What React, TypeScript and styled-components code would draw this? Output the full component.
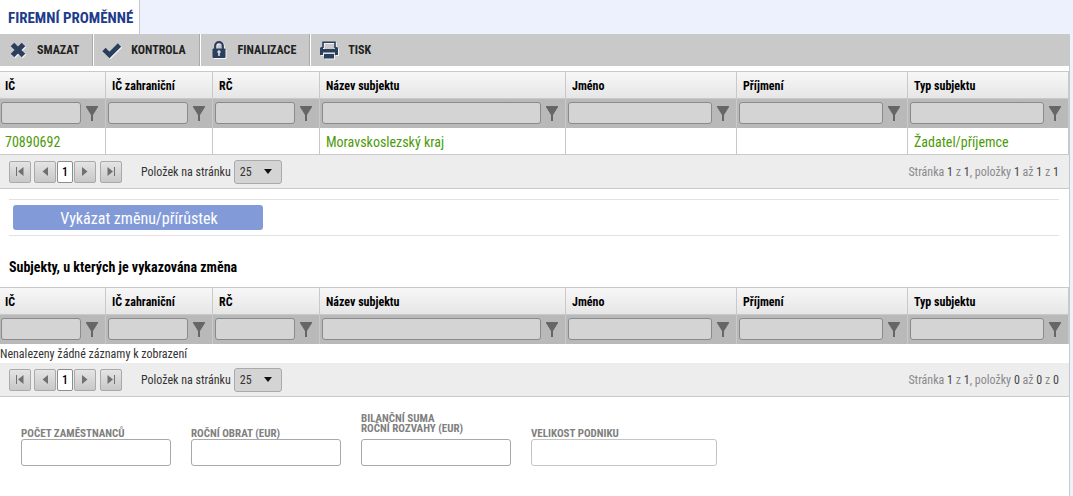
import React from "react";
import styled, { createGlobalStyle } from "styled-components";

const Global = createGlobalStyle`
  * { box-sizing: border-box; }
  body {
    margin: 0;
    background: #edf1fd;
    color: #333;
    font-family: "Roboto Condensed", "Liberation Sans Narrow", Roboto, sans-serif;
    font-size: 12px;
    line-height: 16px;
  }
  button, input, select { font: inherit; color: inherit; margin: 0; }
`;

const Page = styled.div`
  margin-right: 3px;
`;

const Tab = styled.h1`
  display: flex;
  align-items: center;
  width: fit-content;
  height: 34px;
  margin: 0;
  padding: 2px 6px 0 8px;
  background: #fff;
  border-right: 1px solid #c9c9c9;
  color: #1e3c8c;
  font-size: 15px;
  font-weight: 700;
  white-space: nowrap;
`;

const Panel = styled.main`
  min-height: calc(100vh - 34px);
  background: #fff;
  border-right: 1px solid #c9c9c9;
`;

const Toolbar = styled.div`
  display: flex;
  height: 32px;
  background: #c9c9c9;
  margin-right: -1px;
  border-top-right-radius: 2px;
`;

const ToolButton = styled.button`
  display: flex;
  align-items: center;
  gap: 9px;
  padding: 0 14px 0 8px;
  border: 0;
  background: none;
  color: #222;
  font-weight: 700;
  white-space: nowrap;

  svg { width: 20px; height: 20px; filter: drop-shadow(1px 1px 0 #f2f2f2); }
  &:not(:last-child) {
    border-right: 1px solid #fff;
    box-shadow: inset -1px 0 0 #aaa;
  }
`;

const Grid = styled.section`
  margin-top: 5px;
`;

const Table = styled.table`
  width: 100%;
  table-layout: fixed;
  border-collapse: separate;
  border-spacing: 0;
  border-top: 1px solid #c9c9c9;
`;

const Col = styled.col<{ $w?: number }>`
  width: ${(p) => (p.$w ? p.$w + "px" : "auto")};
`;

const HeadCell = styled.th`
  height: 27px;
  padding: 1px 6px 0 6px;
  border-left: 1px solid #c9c9c9;
  border-bottom: 1px solid #c9c9c9;
  background: linear-gradient(#f7f7f7, #e6e6e6);
  color: #000;
  text-align: left;
  font-weight: 700;
  white-space: nowrap;
  &:first-child { border-left: 0; padding-left: 5px; }
  &:last-child { border-right: 1px solid #c9c9c9; }
`;

const FilterCell = styled.td`
  height: 29px;
  padding: 0 7px 1px 2px;
  border-left: 1px solid #c9c9c9;
  background: #b9b9b9;
  &:first-child { border-left: 0; padding-left: 1px; }
  &:last-child { border-right: 1px solid #c9c9c9; }
`;

const FilterBox = styled.div`
  display: flex;
  align-items: center;
  gap: 5px;
`;

const FilterInput = styled.input`
  flex: 1;
  min-width: 0;
  height: 22px;
  border: 1px solid #8a8a8a;
  border-radius: 3px;
  background: #d4d4d4;
  padding: 0 4px;
`;

const FilterButton = styled.button`
  display: flex;
  padding: 0;
  border: 0;
  background: none;
  color: #666;
`;

const Cell = styled.td`
  height: 27px;
  padding: 2px 6px 0 6px;
  border-left: 1px solid #c9c9c9;
  border-bottom: 1px solid #c9c9c9;
  color: #4c9a06;
  font-size: 14px;
  white-space: nowrap;
  &:first-child { border-left: 0; padding-left: 5px; }
  &:last-child { border-right: 1px solid #c9c9c9; }
`;

const EmptyCell = styled.td`
  height: 19px;
  padding: 0;
`;

const Pager = styled.nav`
  display: flex;
  align-items: center;
  height: 34px;
  padding: 0 10px 0 9px;
  background: #ededed;
  border-bottom: 1px solid #c9c9c9;
  white-space: nowrap;
`;

const PagerButtons = styled.div`
  display: flex;
  gap: 3px;
  margin-right: 19px;
`;

const PagerGroup = styled.div`
  display: flex;
  gap: 1px;
  padding-right: 1px;
`;

const PagerButton = styled.button`
  display: flex;
  align-items: center;
  justify-content: center;
  width: 22px;
  height: 22px;
  padding: 0;
  border: 1px solid #aaa;
  border-radius: 2px;
  background: linear-gradient(#e4e4e4, #c8c8c8);
  color: #707070;
`;

const PageNumber = styled(PagerButton)`
  width: 16px;
  background: #fff;
  border-color: #8c8c8c;
  color: #000;
  font-weight: 500;
`;

const SizeLabel = styled.label`
  display: flex;
  align-items: center;
  gap: 3px;
`;

const SelectWrap = styled.span`
  display: grid;
  grid-template-columns: 1fr 18px;
  align-items: center;
  svg { grid-area: 1 / 2; pointer-events: none; }
`;

const Select = styled.select`
  grid-area: 1 / 1 / 2 / 3;
  appearance: none;
  width: 48px;
  height: 24px;
  padding: 0 5px;
  border: 1px solid #aaa;
  border-radius: 3px;
  background: #d4d4d4;
`;

const PagerInfo = styled.span`
  margin-left: auto;
  color: #8a8a8a;
  strong { color: #444; font-weight: 400; }
`;

const ActionBar = styled.div`
  margin: 10px 10px 0 9px;
  padding: 5px 4px;
  border-top: 1px solid #e2e2e2;
  border-bottom: 1px solid #e2e2e2;
`;

const ActionButton = styled.button`
  display: block;
  width: 250px;
  height: 25px;
  padding: 2px 0 0 2px;
  border: 0;
  border-radius: 3px;
  background: #829bd8;
  color: #fff;
  font-size: 16px;
`;

const Heading = styled.h2`
  margin: 22px 9px 11px;
  color: #000;
  font-size: 14px;
  line-height: 18px;
  font-weight: 700;
`;

const Form = styled.form`
  display: flex;
  flex-wrap: wrap;
  align-items: flex-end;
  gap: 20px;
  padding: 17px 21px 30px;
`;

const Field = styled.label<{ $w: number }>`
  display: flex;
  flex-direction: column;
  width: ${(p) => p.$w}px;
  color: #808080;
  font-size: 11px;
  line-height: 10px;
  font-weight: 700;
`;

const FieldCaption = styled.span<{ $lines?: boolean }>`
  padding-bottom: ${(p) => (p.$lines ? 5 : 0)}px;
  white-space: pre-line;
`;

const FieldInput = styled.input`
  width: 100%;
  height: 27px;
  padding: 0 6px;
  border: 1px solid #a8a8a8;
  border-radius: 3px;
  background: #fff;
  &:read-only { border-color: #c4c4c4; }
`;

const navy = "#2a3e5e";

const CrossIcon = () => (
  <svg viewBox="0 0 20 20" aria-hidden="true">
    <path d="M4.500 4.500 15.500 15.500M15.500 4.500 4.500 15.500" stroke={navy} strokeWidth="5" />
  </svg>
);
const CheckIcon = () => (
  <svg viewBox="0 0 20 20" aria-hidden="true">
    <path d="M2 9.500 7.500 15 17.500 5" fill="none" stroke={navy} strokeWidth="4.600" />
  </svg>
);
const LockIcon = () => (
  <svg viewBox="0 0 20 20" aria-hidden="true">
    <path d="M6.200 10V6a3.800 3.800 0 0 1 7.600 0V10" fill="none" stroke={navy} strokeWidth="2.200" />
    <rect x="3.500" y="8.500" width="13" height="9.500" rx="1" fill={navy} />
    <path d="M10 10.200a1.700 1.700 0 0 1 .8 3.200V16H9.200v-2.600A1.700 1.700 0 0 1 10 10.200z" fill="#d8d8d8" />
  </svg>
);
const PrinterIcon = () => (
  <svg viewBox="0 0 20 20" aria-hidden="true">
    <path d="M4 8V2.300h12V8" fill="none" stroke={navy} strokeWidth="1.600" />
    <path d="M1 8.500q0-1.500 1.500-1.500H4v2h12V7h1.500q1.500 0 1.500 1.500V15h-3v-2.500H4V15H1z" fill={navy} />
    <path d="M5 14h10v4.500H5z" fill={navy} />
  </svg>
);
const FunnelIcon = () => (
  <svg width="12" height="15" viewBox="0 0 12 15" aria-hidden="true">
    <path d="M0 0h12v1L7 9v6H5V9L0 1z" fill="currentColor" />
  </svg>
);

type Move = "first" | "prev" | "next" | "last";
const MoveIcon = ({ move }: { move: Move }) => (
  <svg width="8" height="10" viewBox="0 0 8 10" aria-hidden="true">
    {move === "first" && <path d="M0 0h1v9H0zM7.500 0v9L2 4.500z" fill="currentColor" />}
    {move === "prev" && <path d="M7 0v9L1.500 4.500z" fill="currentColor" />}
    {move === "next" && <path d="M1 0v9l5.500-4.500z" fill="currentColor" />}
    {move === "last" && <path d="M7 0h1v9H7zM.5 0v9L6 4.500z" fill="currentColor" />}
  </svg>
);

const columns: { title: string; width?: number }[] = [
  { title: "IČ", width: 105 },
  { title: "IČ zahraniční", width: 107 },
  { title: "RČ", width: 107 },
  { title: "Název subjektu" },
  { title: "Jméno", width: 171 },
  { title: "Příjmení", width: 171 },
  { title: "Typ subjektu", width: 162 },
];

const SubjectGrid = ({ rows, from, to }: { rows: string[][]; from: number; to: number }) => (
  <Grid>
    <Table>
      <colgroup>
        {columns.map((c) => <Col key={c.title} $w={c.width} />)}
      </colgroup>
      <thead>
        <tr>{columns.map((c) => <HeadCell key={c.title} scope="col">{c.title}</HeadCell>)}</tr>
        <tr>
          {columns.map((c) => (
            <FilterCell key={c.title}>
              <FilterBox>
                <FilterInput aria-label={c.title} />
                <FilterButton type="button" aria-label="Filtr"><FunnelIcon /></FilterButton>
              </FilterBox>
            </FilterCell>
          ))}
        </tr>
      </thead>
      <tbody>
        {rows.map((r) => (
          <tr key={r[0]}>{r.map((v, i) => <Cell key={i}>{v}</Cell>)}</tr>
        ))}
        {rows.length === 0 && (
          <tr><EmptyCell colSpan={columns.length}>Nenalezeny žádné záznamy k zobrazení</EmptyCell></tr>
        )}
      </tbody>
    </Table>
    <Pager aria-label="Stránkování">
      <PagerButtons>
        <PagerButton aria-label="První"><MoveIcon move="first" /></PagerButton>
        <PagerGroup>
          <PagerButton aria-label="Předchozí"><MoveIcon move="prev" /></PagerButton>
          <PageNumber>1</PageNumber>
          <PagerButton aria-label="Další"><MoveIcon move="next" /></PagerButton>
        </PagerGroup>
        <PagerButton aria-label="Poslední"><MoveIcon move="last" /></PagerButton>
      </PagerButtons>
      <SizeLabel>
        Položek na stránku
        <SelectWrap>
          <Select defaultValue="25"><option>25</option></Select>
          <svg width="8" height="5" viewBox="0 0 8 5" aria-hidden="true"><path d="M0 0h8L4 5z" fill="#111" /></svg>
        </SelectWrap>
      </SizeLabel>
      <PagerInfo>
        Stránka <strong>1</strong> z <strong>1</strong>, položky <strong>{from}</strong> až <strong>{to}</strong> z <strong>{to}</strong>
      </PagerInfo>
    </Pager>
  </Grid>
);

export default function App() {
  return (
    <>
      <Global />
      <Page>
        <Tab>FIREMNÍ PROMĚNNÉ</Tab>
        <Panel>
          <Toolbar>
            <ToolButton><CrossIcon />SMAZAT</ToolButton>
            <ToolButton><CheckIcon />KONTROLA</ToolButton>
            <ToolButton><LockIcon />FINALIZACE</ToolButton>
            <ToolButton><PrinterIcon />TISK</ToolButton>
          </Toolbar>
          <SubjectGrid
            rows={[["70890692", "", "", "Moravskoslezský kraj", "", "", "Žadatel/příjemce"]]}
            from={1}
            to={1}
          />
          <ActionBar>
            <ActionButton>Vykázat změnu/přírůstek</ActionButton>
          </ActionBar>
          <Heading>Subjekty, u kterých je vykazována změna</Heading>
          <SubjectGrid rows={[]} from={0} to={0} />
          <Form>
            <Field $w={150}><FieldCaption>POČET ZAMĚSTNANCŮ</FieldCaption><FieldInput /></Field>
            <Field $w={150}><FieldCaption>ROČNÍ OBRAT (EUR)</FieldCaption><FieldInput /></Field>
            <Field $w={150}><FieldCaption $lines>{"BILANČNÍ SUMA\nROČNÍ ROZVAHY (EUR)"}</FieldCaption><FieldInput /></Field>
            <Field $w={186}><FieldCaption>VELIKOST PODNIKU</FieldCaption><FieldInput readOnly /></Field>
          </Form>
        </Panel>
      </Page>
    </>
  );
}
